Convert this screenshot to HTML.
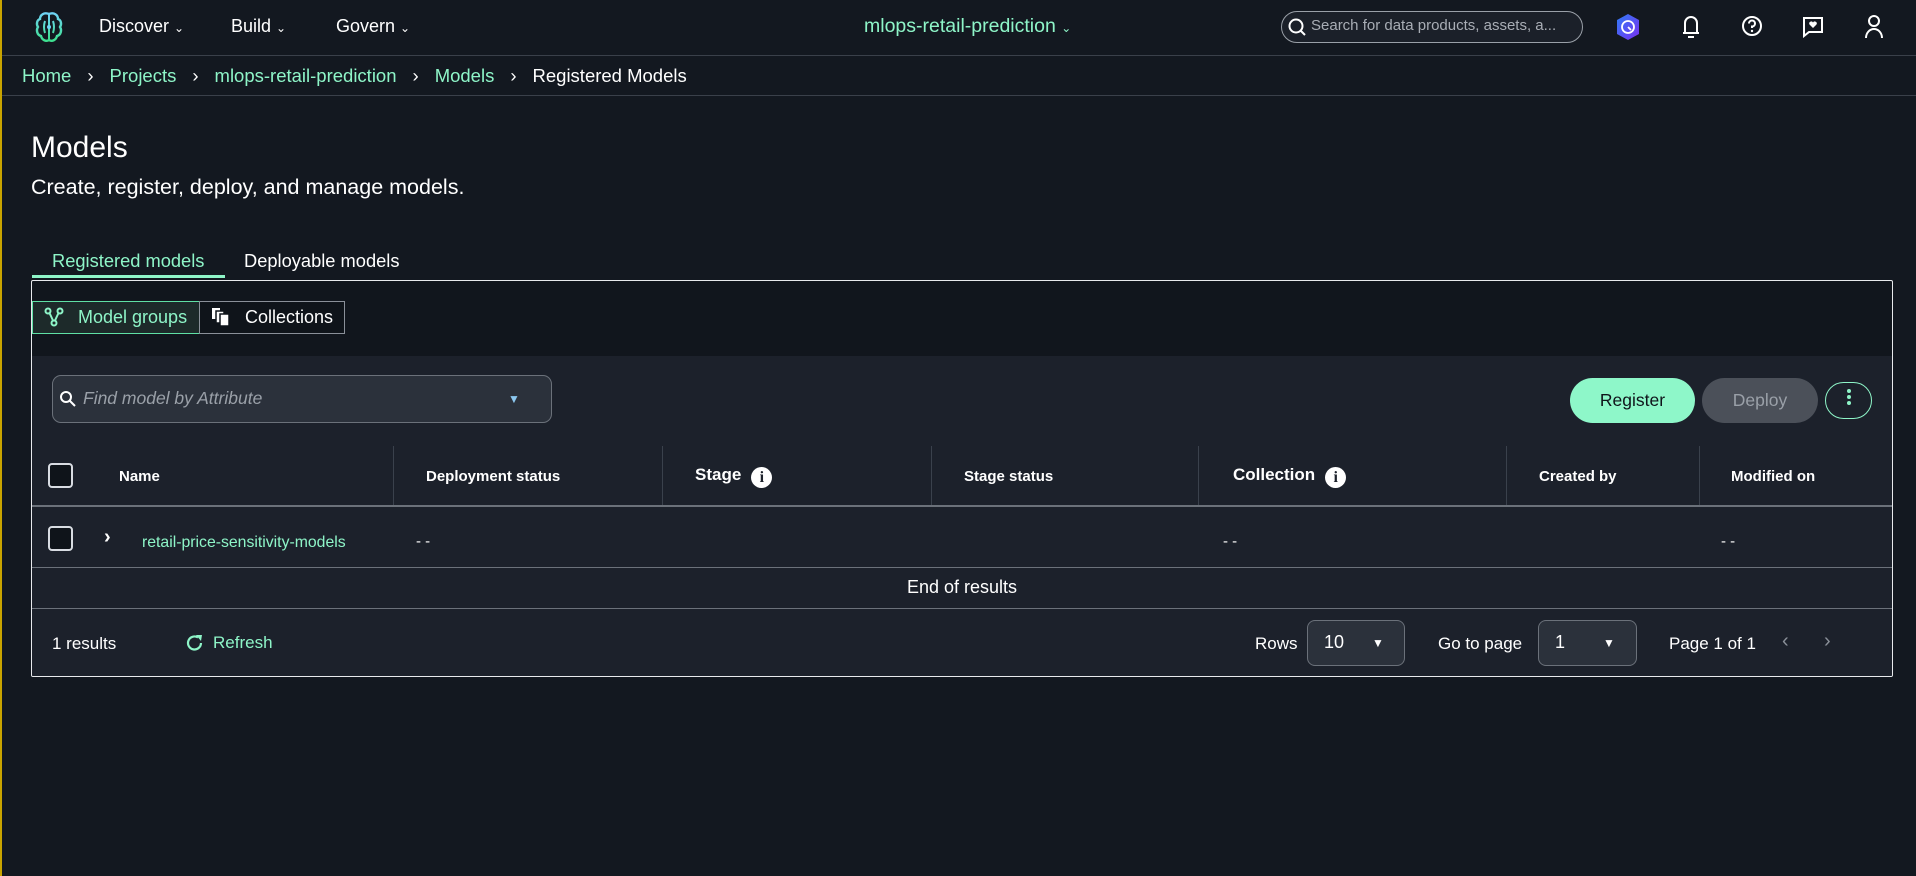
<!DOCTYPE html>
<html><head><meta charset="utf-8"><style>
*{box-sizing:border-box;margin:0;padding:0}
body{width:1916px;height:876px;background:#131820;color:#fff;font-family:"Liberation Sans",sans-serif;position:relative;overflow:hidden;border-left:2px solid #c9a400}
.a{position:absolute;white-space:nowrap}
.g{color:#8ef5c8}
.hdr{font-weight:bold;font-size:15px;top:468px}
.sep{position:absolute;width:1px;background:#3a414c;top:446px;height:60px}
.cb{position:absolute;width:25px;height:25px;border:2px solid #d8dce2;border-radius:4px;background:#0f141a}
.info{display:inline-block;width:21px;height:21px;border-radius:50%;background:#fff;color:#1c212b;font-size:16px;font-weight:bold;text-align:center;line-height:21px;margin-left:10px;font-family:'Liberation Serif',serif;vertical-align:-2px}
svg{display:block}
.bs{margin:0 16px}
</style></head><body>
<div class="a" style="left:0;top:55px;width:1916px;height:1px;background:#3a404a"></div>
<div class="a" style="left:0;top:95px;width:1916px;height:1px;background:#3a404a"></div>
<svg class="a" style="left:32px;top:11px" width="30" height="32" viewBox="0 0 30 32"><defs><linearGradient id="lg" x1="0" y1="0" x2="0" y2="1"><stop offset="0" stop-color="#6fd3f5"/><stop offset="1" stop-color="#3ee08f"/></linearGradient></defs><path d="M15 3 C10 1 6 4 6 8 C3 9 2 13 4 16 C2 19 3 24 7 25 C8 29 12 31 15 29 C18 31 22 29 23 25 C27 24 28 19 26 16 C28 13 27 9 24 8 C24 4 20 1 15 3 Z" fill="none" stroke="url(#lg)" stroke-width="2.4"/><path d="M15 4 V28 M11 10 Q9 16 11 22 M19 10 Q21 16 19 22" stroke="url(#lg)" stroke-width="2" fill="none"/><circle cx="15" cy="16" r="2" fill="#6fd3f5"/></svg>
<div class="a" style="left:97px;top:16px;font-size:18px">Discover <span style="font-size:12px">&#8964;</span></div>
<div class="a" style="left:229px;top:16px;font-size:18px">Build <span style="font-size:12px">&#8964;</span></div>
<div class="a" style="left:334px;top:16px;font-size:18px">Govern <span style="font-size:12px">&#8964;</span></div>
<div class="a g" style="left:862px;top:15px;font-size:19.5px">mlops-retail-prediction <span style="font-size:12px">&#8964;</span></div>
<div class="a" style="left:1279px;top:11px;width:302px;height:32px;border:1.5px solid #9aa0a8;border-radius:16px;background:#1b2029"></div>
<svg class="a" style="left:1285px;top:17px" width="20" height="20" viewBox="0 0 20 20"><circle cx="9" cy="9" r="6.5" stroke="#fff" stroke-width="2" fill="none"/><path d="M13.5 13.5 L18 18" stroke="#fff" stroke-width="2"/></svg>
<div class="a" style="left:1309px;top:17px;font-size:15px;color:#a8adb5">Search for data products, assets, a...</div>
<svg class="a" style="left:1614px;top:13px" width="24" height="28" viewBox="0 0 24 28"><defs><linearGradient id="lg2" x1="0" y1="0" x2="1" y2="1"><stop offset="0" stop-color="#2f7cf6"/><stop offset="1" stop-color="#7a2ff0"/></linearGradient></defs><path d="M12 1 L23 7 V21 L12 27 L1 21 V7 Z" fill="url(#lg2)"/><circle cx="12" cy="14" r="6" stroke="#fff" stroke-width="1.8" fill="none"/><path d="M12 14 L15 17" stroke="#fff" stroke-width="1.8"/></svg>
<svg class="a" style="left:1678px;top:14px" width="22" height="26" viewBox="0 0 22 26"><path d="M5 19 V9 A6 6 0 0 1 17 9 V19 Z M3 19 H19" stroke="#fff" stroke-width="2" fill="none"/><path d="M8 23 H14" stroke="#fff" stroke-width="2"/></svg>
<svg class="a" style="left:1739px;top:15px" width="22" height="22" viewBox="0 0 22 22"><circle cx="11" cy="11" r="9" stroke="#fff" stroke-width="2" fill="none"/><path d="M8 8.5 A3 3 0 1 1 11 11.5 V13" stroke="#fff" stroke-width="2" fill="none"/><circle cx="11" cy="16" r="1.2" fill="#fff"/></svg>
<svg class="a" style="left:1800px;top:16px" width="22" height="22" viewBox="0 0 22 22"><path d="M2 2 H20 V16 H7 L2 20 Z" stroke="#fff" stroke-width="2" fill="none"/><path d="M11 12 L7.5 8.5 A1.8 1.8 0 0 1 11 6.5 A1.8 1.8 0 0 1 14.5 8.5 Z" fill="#fff"/></svg>
<svg class="a" style="left:1861px;top:14px" width="22" height="26" viewBox="0 0 22 26"><circle cx="11" cy="7" r="5" stroke="#fff" stroke-width="2" fill="none"/><path d="M3 24 A8 9 0 0 1 19 24" stroke="#fff" stroke-width="2" fill="none"/></svg>
<div class="a" style="left:20px;top:65px;font-size:18.5px"><span class="g">Home</span><span class="bs">&#8250;</span><span class="g">Projects</span><span class="bs">&#8250;</span><span class="g">mlops-retail-prediction</span><span class="bs">&#8250;</span><span class="g">Models</span><span class="bs">&#8250;</span><span>Registered Models</span></div>
<div class="a" style="left:29px;top:131px;font-size:30px">Models</div>
<div class="a" style="left:29px;top:175px;font-size:21.5px">Create, register, deploy, and manage models.</div>
<div class="a g" style="left:50px;top:250px;font-size:18.3px">Registered models</div>
<div class="a" style="left:242px;top:250px;font-size:18.3px">Deployable models</div>
<div class="a" style="left:30px;top:275px;width:193px;height:3px;background:#8ef5c8"></div>
<div class="a" style="left:29px;top:280px;width:1862px;height:397px;border:1.5px solid #e8eaed;border-radius:2px;background:#11161d;overflow:hidden">
 <div class="a" style="left:0;top:75px;width:1862px;height:322px;background:#1c212b"></div>
</div>
<div class="a" style="left:30px;top:301px;width:168px;height:33px;border:1.5px solid #5fe0a5;background:#1d2a2a"></div>
<svg class="a" style="left:42px;top:307px" width="20" height="20" viewBox="0 0 20 20"><circle cx="4" cy="4" r="2.5" stroke="#8ef5c8" stroke-width="2" fill="none"/><circle cx="16" cy="4" r="2.5" stroke="#8ef5c8" stroke-width="2" fill="none"/><circle cx="10" cy="16" r="2.5" stroke="#8ef5c8" stroke-width="2" fill="none"/><path d="M5.5 6 L9 13.5 M14.5 6 L11 13.5" stroke="#8ef5c8" stroke-width="2"/></svg>
<div class="a g" style="left:76px;top:307px;font-size:18px">Model groups</div>
<div class="a" style="left:197px;top:301px;width:146px;height:33px;border:1.5px solid #8a9099;background:#0f141a"></div>
<svg class="a" style="left:209px;top:307px" width="20" height="20" viewBox="0 0 20 20"><rect x="1" y="1" width="8" height="11" fill="#fff"/><rect x="5" y="4" width="8" height="12" fill="#fff" stroke="#0f141a" stroke-width="1.5"/><rect x="9" y="7" width="9" height="12" fill="#fff" stroke="#0f141a" stroke-width="1.5"/></svg>
<div class="a" style="left:243px;top:307px;font-size:18px">Collections</div>
<div class="a" style="left:50px;top:375px;width:500px;height:48px;border:1.5px solid #6b717a;border-radius:9px;background:#2b313b"></div>
<svg class="a" style="left:57px;top:390px" width="18" height="18" viewBox="0 0 18 18"><circle cx="7" cy="7" r="5" stroke="#fff" stroke-width="2" fill="none"/><path d="M10.5 10.5 L16 16" stroke="#fff" stroke-width="2"/></svg>
<div class="a" style="left:81px;top:388px;font-size:17.5px;font-style:italic;color:#9aa0a8">Find model by Attribute</div>
<div class="a" style="left:506px;top:392px;font-size:12px;color:#8cc8f0">&#9660;</div>
<div class="a" style="left:1568px;top:378px;width:125px;height:45px;border-radius:23px;background:#8ef7c9;color:#0f141a;font-size:17.5px;text-align:center;line-height:45px">Register</div>
<div class="a" style="left:1700px;top:378px;width:116px;height:45px;border-radius:23px;background:#4b5059;color:#9aa0a8;font-size:17.5px;text-align:center;line-height:45px">Deploy</div>
<div class="a" style="left:1823px;top:382px;width:47px;height:37px;border-radius:19px;border:1.5px solid #8ef5c8"></div>
<svg class="a" style="left:1844px;top:388px" width="6" height="20" viewBox="0 0 6 20"><circle cx="3" cy="3" r="2" fill="#8ef5c8"/><circle cx="3" cy="9" r="2" fill="#8ef5c8"/><circle cx="3" cy="15" r="2" fill="#8ef5c8"/></svg>
<div class="cb" style="left:46px;top:463px"></div>
<div class="a hdr" style="left:117px">Name</div>
<div class="sep" style="left:391px"></div>
<div class="a hdr" style="left:424px">Deployment status</div>
<div class="sep" style="left:660px"></div>
<div class="a hdr" style="left:693px;top:465px;font-size:17px">Stage<span class="info">i</span></div>
<div class="sep" style="left:929px"></div>
<div class="a hdr" style="left:962px">Stage status</div>
<div class="sep" style="left:1196px"></div>
<div class="a hdr" style="left:1231px;top:465px;font-size:17px">Collection<span class="info">i</span></div>
<div class="sep" style="left:1504px"></div>
<div class="a hdr" style="left:1537px">Created by</div>
<div class="sep" style="left:1697px"></div>
<div class="a hdr" style="left:1729px">Modified on</div>
<div class="a" style="left:30px;top:505px;width:1860px;height:2px;background:#6b717a"></div>
<div class="cb" style="left:46px;top:526px"></div>
<div class="a" style="left:102px;top:526px;font-size:20px;font-weight:bold">&#8250;</div>
<div class="a g" style="left:140px;top:534px;font-size:15.8px">retail-price-sensitivity-models</div>
<div class="a" style="left:414px;top:533px;font-size:15px">- -</div>
<div class="a" style="left:1221px;top:533px;font-size:15px">- -</div>
<div class="a" style="left:1719px;top:533px;font-size:15px">- -</div>
<div class="a" style="left:30px;top:567px;width:1860px;height:1px;background:#6b717a"></div>
<div class="a" style="left:30px;top:577px;width:1860px;text-align:center;font-size:18px">End of results</div>
<div class="a" style="left:30px;top:608px;width:1860px;height:1px;background:#6b717a"></div>
<div class="a" style="left:50px;top:634px;font-size:17px">1 results</div>
<svg class="a" style="left:183px;top:633px" width="20" height="20" viewBox="0 0 20 20"><path d="M16 10 A6.5 6.5 0 1 1 13 4.5" stroke="#8ef5c8" stroke-width="2.2" fill="none"/><path d="M11 2 L17 2 L16 8 Z" fill="#8ef5c8"/></svg>
<div class="a g" style="left:211px;top:633px;font-size:17px">Refresh</div>
<div class="a" style="left:1253px;top:634px;font-size:17px">Rows</div>
<div class="a" style="left:1305px;top:620px;width:98px;height:46px;border:1.5px solid #6b717a;border-radius:8px;background:#2b313b"></div>
<div class="a" style="left:1322px;top:632px;font-size:18px">10</div>
<div class="a" style="left:1370px;top:636px;font-size:12px">&#9660;</div>
<div class="a" style="left:1436px;top:634px;font-size:17px">Go to page</div>
<div class="a" style="left:1536px;top:620px;width:99px;height:46px;border:1.5px solid #6b717a;border-radius:8px;background:#2b313b"></div>
<div class="a" style="left:1553px;top:632px;font-size:18px">1</div>
<div class="a" style="left:1601px;top:636px;font-size:12px">&#9660;</div>
<div class="a" style="left:1667px;top:634px;font-size:17px">Page 1 of 1</div>
<div class="a" style="left:1780px;top:630px;font-size:20px;color:#8a9099">&#8249;</div>
<div class="a" style="left:1822px;top:630px;font-size:20px;color:#8a9099">&#8250;</div>
</body></html>
